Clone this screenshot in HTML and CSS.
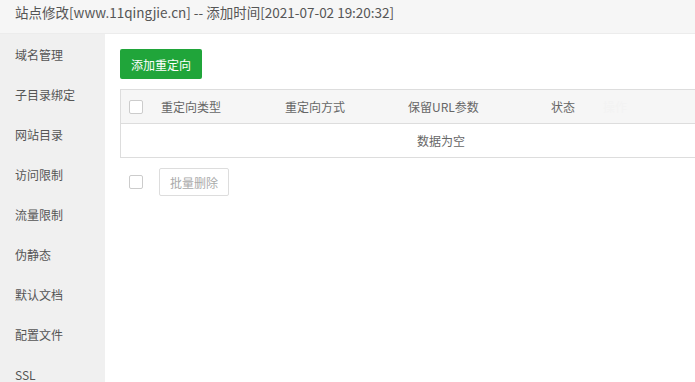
FILE: index.html
```html
<!DOCTYPE html>
<html lang="zh-CN">
<head>
    <meta charset="UTF-8">
    <title>站点修改</title>
    <link rel="stylesheet" href="styles.css">
</head>
<body>
    <div class="title">站点修改[www.11qingjie.cn] -- 添加时间[2021-07-02 19:20:32]</div>
    <div class="layout">
        <div class="side">
            <div class="side-item">域名管理</div>
            <div class="side-item">子目录绑定</div>
            <div class="side-item">网站目录</div>
            <div class="side-item">访问限制</div>
            <div class="side-item">流量限制</div>
            <div class="side-item">伪静态</div>
            <div class="side-item">默认文档</div>
            <div class="side-item">配置文件</div>
            <div class="side-item">SSL</div>
        </div>
        <div class="main">
            <button class="btn-green">添加重定向</button>
            <div class="table">
                <div class="row head">
                    <div class="cell chk"><span class="box"></span></div>
                    <div class="cell c1">重定向类型</div>
                    <div class="cell c2">重定向方式</div>
                    <div class="cell c3">保留URL参数</div>
                    <div class="cell c4">状态</div>
                    <div class="cell c5">操作</div>
                </div>
                <div class="row empty">数据为空</div>
            </div>
            <div class="batch">
                <span class="box"></span>
                <button class="btn-gray">批量删除</button>
            </div>
        </div>
    </div>
</body>
</html>
```

FILE: styles.css
```css
html, body {
    margin: 0;
    padding: 0;
    overflow: hidden;
}
body {
    width: 695px;
    height: 382px;
    font-family: "Noto Sans CJK SC", "Open Sans", sans-serif;
    background: #fff;
}
.title {
    height: 33px;
    line-height: 25px;
    padding-left: 15px;
    font-size: 13.5px;
    color: #555;
    background: #f6f6f6;
    border-bottom: 1px solid #ececec;
    white-space: nowrap;
}
.layout {
    display: flex;
    height: 348px;
}
.side {
    width: 105px;
    flex-shrink: 0;
    background: #f0f0f0;
    padding-top: 1px;
}
.side-item {
    height: 40px;
    line-height: 40px;
    padding-left: 15px;
    font-size: 12px;
    color: #555;
}
.main {
    flex: 1;
    padding: 15px 0 0 15px;
    min-width: 0;
    overflow: hidden;
}
.btn-green {
    display: block;
    width: 82px;
    height: 30px;
    padding: 0;
    border: none;
    border-radius: 2px;
    background: #20a53a;
    color: #fff;
    font-family: inherit;
    font-size: 12px;
}
.table {
    margin-top: 10px;
    width: 700px;
    border: 1px solid #ddd;
    border-right: none;
}
.row {
    display: flex;
    height: 33px;
    align-items: center;
    font-size: 12px;
}
.head {
    background: #f6f6f6;
    border-bottom: 1px solid #ddd;
    color: #666;
}
.cell {
    flex-shrink: 0;
    box-sizing: border-box;
}
.chk {
    width: 40px;
    padding-left: 8px;
    display: flex;
}
.c1 { width: 124px; }
.c2 { width: 123px; }
.c3 { width: 143px; }
.c4 { width: 52px; }
.c5 { color: #f3f3f3; }
.box {
    display: inline-block;
    width: 14px;
    height: 14px;
    border: 1px solid #ccc;
    border-radius: 2px;
    background: #fff;
    box-sizing: border-box;
}
.empty {
    justify-content: center;
    width: 640px;
    color: #666;
}
.batch {
    display: flex;
    align-items: center;
    margin-top: 10px;
    padding-left: 9px;
}
.btn-gray {
    margin-left: 16px;
    width: 70px;
    height: 28px;
    padding: 0;
    border: 1px solid #ddd;
    border-radius: 2px;
    background: #fff;
    color: #aaa;
    font-family: inherit;
    font-size: 12px;
}
```
